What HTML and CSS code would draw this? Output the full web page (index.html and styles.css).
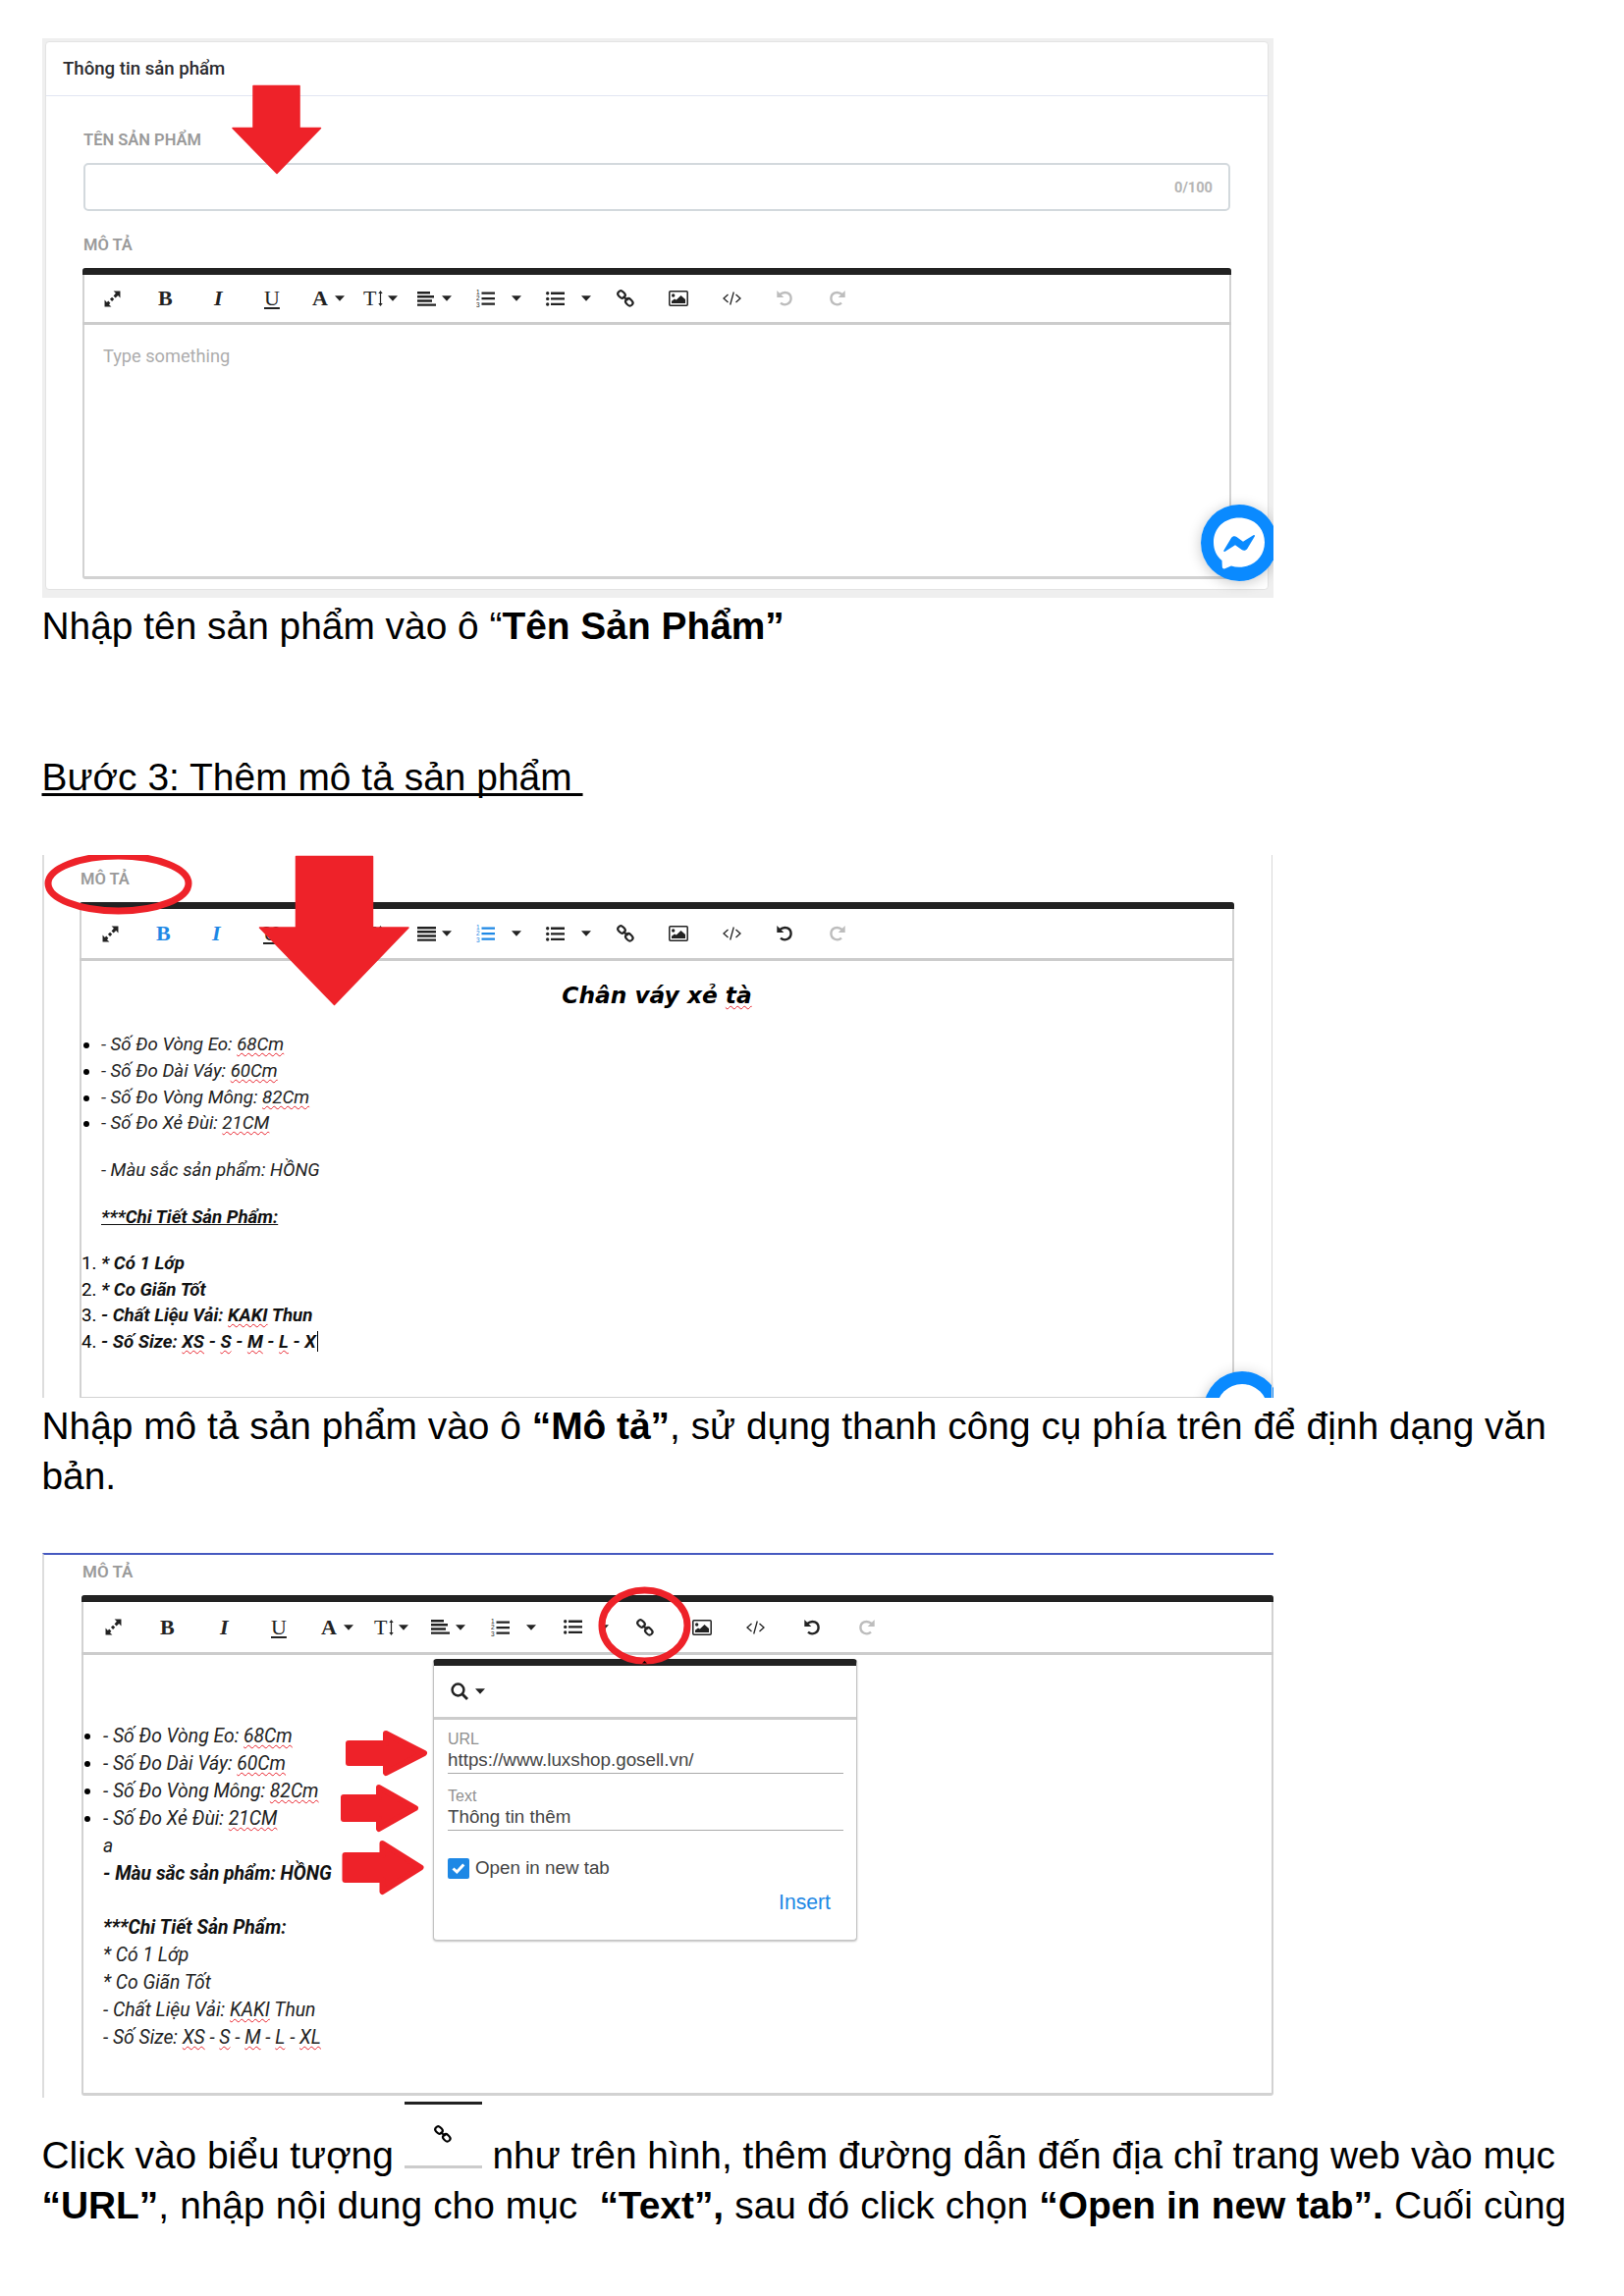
FILE: index.html
```html
<!DOCTYPE html>
<html lang="vi">
<head>
<meta charset="utf-8">
<title>Hướng dẫn thêm sản phẩm</title>
<link rel="stylesheet" href="styles.css">
</head>
<body>
<svg class="defs" aria-hidden="true">
  <symbol id="full" viewBox="0 0 16 16"><path d="M9 .5h6.500v6.500l-2.200-2.200-2.300 2.300-2-2 2.200-2.400zM.5 15.500V9l2.200 2.200 1.300-1.300 2 2-1.300 1.400L7 15.500zM7.600 6.300l2 2-2 2-2-2z"/></symbol>
  <symbol id="caret" viewBox="0 0 9 5"><path d="M0 0h9L4.500 5z"/></symbol>
  <symbol id="updown" viewBox="0 0 5 16"><path d="M2.500 0L4.700 3H3.100v10h1.600L2.500 16 .3 13h1.600V3H.3z"/></symbol>
  <symbol id="left" viewBox="0 0 19 15"><path d="M0 0h13v2.400H0zM0 4.100h17v2.400H0zM0 8.300h15v2.400H0zM0 12.400h19v2.400H0z"/></symbol>
  <symbol id="justify" viewBox="0 0 19 15"><path d="M0 0h19v2.400H0zM0 4.100h19v2.400H0zM0 8.300h19v2.400H0zM0 12.400h19v2.400H0z"/></symbol>
  <symbol id="ul" viewBox="0 0 19 15"><path d="M5 .6h14v2.300H5zM5 6.200h14v2.300H5zM5 11.800h14v2.300H5z"/><circle cx="1.700" cy="1.700" r="1.700"/><circle cx="1.700" cy="7.400" r="1.700"/><circle cx="1.700" cy="13" r="1.700"/></symbol>
  <symbol id="link" viewBox="0 0 18 18"><g fill="none" stroke="currentColor" stroke-width="2.100"><rect x="-4" y="-3" width="8" height="6" rx="3" transform="translate(5 5) rotate(45)"/><rect x="-4" y="-3" width="8" height="6" rx="3" transform="translate(12.800 12.800) rotate(45)"/><path d="M6.500 7l5 4"/></g></symbol>
  <symbol id="image" viewBox="0 0 20 16"><rect x=".8" y=".8" width="18.400" height="14.400" rx="1" fill="none" stroke="currentColor" stroke-width="1.500"/><circle cx="4.700" cy="5" r="1.700"/><path d="M3 13v-2.200l3-2.400 1.800 1.200L12.500 5 17 9v4z"/></symbol>
  <symbol id="code" viewBox="0 0 19 14"><path d="M5.500 3L1 7l4.500 4M13.500 3L18 7l-4.500 4M11.300.5l-3.600 13" fill="none" stroke="currentColor" stroke-width="1.300"/></symbol>
  <symbol id="undo" viewBox="0 0 16 16"><path d="M3 4.200C8.500-.5 14.600 3 14.600 8c0 5.500-6.600 8.300-10.600 4.600" fill="none" stroke="currentColor" stroke-width="2.400"/><path d="M.3 0v7h7z"/></symbol>
  <symbol id="search" viewBox="0 0 18 18"><circle cx="7.500" cy="7.500" r="5.900" fill="none" stroke="currentColor" stroke-width="2.500"/><path d="M11.500 11.500l5.500 5.500" stroke="currentColor" stroke-width="2.800"/></symbol>
</svg>

<main class="page">
  <section class="shot shot-info">
    <div class="card">
      <header class="card-head">Thông tin sản phẩm</header>
      <div class="card-body">
        <div class="label">TÊN SẢN PHẨM</div>
        <div class="field">0/100</div>
        <div class="label label-desc">MÔ TẢ</div>
        <div class="editor">
          <div class="toolbar">
            <svg class="ic full"><use href="#full"/></svg>
            <b class="ltr">B</b><i class="ltr">I</i><u class="ltr">U</u>
            <span class="grp"><b class="ltr">A</b><svg class="ic caret"><use href="#caret"/></svg></span>
            <span class="grp size"><span class="ltr">T</span><svg class="ic updown"><use href="#updown"/></svg><svg class="ic caret"><use href="#caret"/></svg></span>
            <span class="grp align"><svg class="ic bars"><use href="#left"/></svg><svg class="ic caret"><use href="#caret"/></svg></span>
            <span class="grp list"><svg class="ic ol" viewBox="0 0 19 18"><path d="M5.500 2.500H19v2.300H5.500zM5.500 8H19v2.300H5.500zM5.500 13.500H19v2.300H5.500z"/><text x="0" y="5.200">1</text><text x="0" y="11.400">2</text><text x="0" y="17.600">3</text></svg><svg class="ic caret"><use href="#caret"/></svg></span>
            <span class="grp list"><svg class="ic bars"><use href="#ul"/></svg><svg class="ic caret"><use href="#caret"/></svg></span>
            <svg class="ic link"><use href="#link"/></svg>
            <svg class="ic image"><use href="#image"/></svg>
            <svg class="ic code"><use href="#code"/></svg>
            <svg class="ic undo off"><use href="#undo"/></svg>
            <svg class="ic undo redo off"><use href="#undo"/></svg>
          </div>
          <div class="placeholder">Type something</div>
        </div>
      </div>
    </div>
    <div class="messenger">
      <svg viewBox="0 0 78 78"><circle cx="39" cy="39" r="39" fill="#0a8aff"/><path d="M39 13.500c-15 0-26 10.600-26 25 0 7.500 3 14 8.500 18.500l.3 6.500c.1 1.500 1.500 2.300 2.800 1.700l6.400-2.700c2.500.8 5.200 1.200 8 1.200 15 0 26-10.700 26-25.200s-11-25-26-25z" fill="#fff"/><path d="M23.500 46.500l7.500-12.500c1.300-2 3.800-2.300 5.500-1l6.500 4.800 10.500-6.500c1-.6 2 .3 1.300 1.300L47.300 45c-1.300 2-3.900 2.300-5.600 1L35 41.200l-10.200 6.600c-1 .6-2-.2-1.300-1.300z" fill="#0a8aff"/></svg>
    </div>
    <svg class="marks" viewBox="0 0 1254 570"><path d="M215 48.500h47v43h21.500l-44.500 46-45-46h21z" class="fill"/></svg>
  </section>

  <p class="text p1">Nhập tên sản phẩm vào ô “<b>Tên Sản Phẩm”</b></p>
  <p class="text p2"><u>Bước 3: Thêm mô tả sản phẩm&nbsp;</u></p>

  <section class="shot shot-desc">
    <div class="label">MÔ TẢ</div>
    <div class="editor">
      <div class="toolbar">
        <svg class="ic full"><use href="#full"/></svg>
        <b class="ltr on">B</b><i class="ltr on">I</i><u class="ltr">U</u>
        <span class="grp"><b class="ltr">A</b><svg class="ic caret"><use href="#caret"/></svg></span>
        <span class="grp size"><span class="ltr">T</span><svg class="ic updown"><use href="#updown"/></svg><svg class="ic caret"><use href="#caret"/></svg></span>
        <span class="grp align"><svg class="ic bars"><use href="#justify"/></svg><svg class="ic caret"><use href="#caret"/></svg></span>
        <span class="grp list"><svg class="ic ol on" viewBox="0 0 19 18"><path d="M5.500 2.500H19v2.300H5.500zM5.500 8H19v2.300H5.500zM5.500 13.500H19v2.300H5.500z"/><text x="0" y="5.200">1</text><text x="0" y="11.400">2</text><text x="0" y="17.600">3</text></svg><svg class="ic caret"><use href="#caret"/></svg></span>
        <span class="grp list"><svg class="ic bars"><use href="#ul"/></svg><svg class="ic caret"><use href="#caret"/></svg></span>
        <svg class="ic link"><use href="#link"/></svg>
        <svg class="ic image"><use href="#image"/></svg>
        <svg class="ic code"><use href="#code"/></svg>
        <svg class="ic undo"><use href="#undo"/></svg>
        <svg class="ic undo redo off"><use href="#undo"/></svg>
      </div>
      <div class="content">
        <h2>Chân váy xẻ <s>tà</s></h2>
        <ul>
          <li>- Số Đo Vòng Eo: <s>68Cm</s></li>
          <li>- Số Đo Dài Váy: <s>60Cm</s></li>
          <li>- Số Đo Vòng Mông: <s>82Cm</s></li>
          <li>- Số Đo Xẻ Đùi: <s>21CM</s></li>
        </ul>
        <p>- Màu sắc sản phẩm: HỒNG</p>
        <p><b><u>***Chi Tiết Sản Phẩm:</u></b></p>
        <ol>
          <li><b>* Có 1 Lớp</b></li>
          <li><b>* Co Giãn Tốt</b></li>
          <li><b>- Chất Liệu Vải: <s>KAKI</s> Thun</b></li>
          <li><b>- Số Size: <s>XS</s> - <s>S</s> - <s>M</s> - <s>L</s> - X</b><span class="cursor"></span></li>
        </ol>
      </div>
    </div>
    <div class="messenger">
      <svg viewBox="0 0 78 78"><circle cx="39" cy="39" r="39" fill="#0a8aff"/><circle cx="39" cy="39" r="26" fill="#fff"/></svg>
    </div>
    <svg class="marks" viewBox="0 0 1254 553"><ellipse cx="77.500" cy="29" rx="71.500" ry="28" class="ring"/><path d="M258.500 1.500h78V74H373L297.500 152.500 221.500 74h37z" class="fill"/></svg>
  </section>

  <p class="text p3">Nhập mô tả sản phẩm vào ô <b>“Mô tả”</b>, sử dụng thanh công cụ phía trên để định dạng văn<br>bản.</p>

  <section class="shot shot-link">
    <div class="label">MÔ TẢ</div>
    <div class="editor">
      <div class="toolbar">
        <svg class="ic full"><use href="#full"/></svg>
        <b class="ltr">B</b><i class="ltr">I</i><u class="ltr">U</u>
        <span class="grp"><b class="ltr">A</b><svg class="ic caret"><use href="#caret"/></svg></span>
        <span class="grp size"><span class="ltr">T</span><svg class="ic updown"><use href="#updown"/></svg><svg class="ic caret"><use href="#caret"/></svg></span>
        <span class="grp align"><svg class="ic bars"><use href="#left"/></svg><svg class="ic caret"><use href="#caret"/></svg></span>
        <span class="grp list"><svg class="ic ol" viewBox="0 0 19 18"><path d="M5.500 2.500H19v2.300H5.500zM5.500 8H19v2.300H5.500zM5.500 13.500H19v2.300H5.500z"/><text x="0" y="5.200">1</text><text x="0" y="11.400">2</text><text x="0" y="17.600">3</text></svg><svg class="ic caret"><use href="#caret"/></svg></span>
        <span class="grp list"><svg class="ic bars"><use href="#ul"/></svg><svg class="ic caret"><use href="#caret"/></svg></span>
        <svg class="ic link"><use href="#link"/></svg>
        <svg class="ic image"><use href="#image"/></svg>
        <svg class="ic code"><use href="#code"/></svg>
        <svg class="ic undo"><use href="#undo"/></svg>
        <svg class="ic undo redo off"><use href="#undo"/></svg>
      </div>
      <div class="content">
        <ul>
          <li>- Số Đo Vòng Eo: <s>68Cm</s></li>
          <li>- Số Đo Dài Váy: <s>60Cm</s></li>
          <li>- Số Đo Vòng Mông: <s>82Cm</s></li>
          <li>- Số Đo Xẻ Đùi: <s>21CM</s></li>
        </ul>
        <p>a<br><b>- Màu sắc sản phẩm: HỒNG</b><br><br><b>***Chi Tiết Sản Phẩm:</b><br>* Có 1 Lớp<br>* Co Giãn Tốt<br>- Chất Liệu Vải: <s>KAKI</s> Thun<br>- Số Size: <s>XS</s> - <s>S</s> - <s>M</s> - <s>L</s> - <s>XL</s></p>
      </div>
    </div>
    <div class="popup">
      <div class="popup-bar"><svg class="ic search"><use href="#search"/></svg><svg class="ic caret"><use href="#caret"/></svg></div>
      <div class="popup-body">
        <div class="input"><small>URL</small><span>https://www.luxshop.gosell.vn/</span></div>
        <div class="input"><small>Text</small><span>Thông tin thêm</span></div>
        <div class="check"><svg class="box" viewBox="0 0 22 21"><rect width="22" height="21" rx="2" fill="#1e88e5"/><path d="M5.500 10.500l3.800 3.500 7-7.500" fill="none" stroke="#fff" stroke-width="3"/></svg><span>Open in new tab</span></div>
        <div class="insert">Insert</div>
      </div>
    </div>
    <svg class="marks" viewBox="0 0 1254 555">
      <ellipse cx="613.500" cy="74" rx="43.500" ry="36" class="ring"/><path d="M611 112.500l2.500-2.500 2.500 2.500z"/>
      <g class="fill round"><path d="M312 194h38v-10l39 20-39 20v-10h-38z"/><path d="M307 249h36v-10l37 21-37 21v-10h-36z"/><path d="M308.500 308h38v-12l39 24.500-39 24.500v-12h-38z"/></g>
    </svg>
  </section>

  <p class="text p4">Click vào biểu tượng <span class="inline-shot"><svg class="ic link"><use href="#link"/></svg></span> như trên hình, thêm đường dẫn đến địa chỉ trang web vào mục<br><span class="last"><b>“URL”</b>, nhập nội dung cho mục&nbsp; <b>“Text”,</b> sau đó click chọn <b>“Open in new tab”.</b> Cuối cùng</span></p>
</main>
</body>
</html>
```
FILE: styles.css
```css
* { box-sizing: border-box; }
body { margin: 0; background: #fff; color: #000; }
.defs { position: absolute; width: 0; height: 0; }
.page { width: 1654px; height: 2339px; padding: 39px 0 0 43px; overflow: hidden; }

/* Body text of the guide */
.text { margin: 0 0 0 -.5px; font: 38.89px/51px "Liberation Sans", Arial, sans-serif; white-space: nowrap; }
.p1 { margin-top: 3px; }
.p2 { margin-top: 103px; }
.p2 u { letter-spacing: .04px; text-decoration-thickness: 3px; text-underline-offset: 3px; text-decoration-skip-ink: none; }
.p3 { margin-top: 3px; }
.p4 { margin-top: 4px; }
.last { word-spacing: .25px; }
.inline-shot { display: inline-block; width: 79px; height: 68px; padding: 21px 0 0 30px; border-top: 3px solid #222; border-bottom: 3px solid #ccc; overflow: hidden; vertical-align: baseline; }

/* Screens */
.shot { position: relative; width: 1254px; overflow: hidden; font: 18.2px/20px Roboto, "Noto Sans", sans-serif; color: #222; }
.shot-info { height: 570px; padding: 3px 5px 8px 3px; background: #efefef; }
.shot-desc { height: 553px; margin-top: 54px; padding: 15px 0 0 37px; border-left: 2px solid #ddd; }
.shot-link { height: 555px; margin-top: 53px; padding: 7px 0 0 39px; border-left: 2px solid #ddd; border-top: 2px solid #4659c0; }
.shot-desc::after { content: ""; position: absolute; top: 0; bottom: 0; right: 1px; width: 1px; background: #d8d8d8; }
.marks { position: absolute; inset: 0; width: 1254px; height: 100%; }
.shot-desc .marks, .shot-link .marks { left: -2px; }
.shot-link .marks { top: -2px; height: 555px; }
.fill { fill: #ee2229; stroke: #ee2229; stroke-width: 1.5px; stroke-linejoin: round; }
.round { stroke-width: 6px; }
.ring { fill: none; stroke: #ee2229; stroke-width: 7px; }
.messenger { position: absolute; left: 1180px; top: 475px; width: 78px; height: 78px; border-radius: 50%; box-shadow: 0 2px 14px rgba(0, 0, 0, .22); }
.messenger svg { display: block; width: 78px; height: 78px; }
.shot-desc .messenger { left: 1181px; top: 526px; }

.card { height: 559px; background: #fff; border: 1px solid #e3e3e3; border-radius: 4px; }
.card-head { height: 55px; padding: 17px 17px 0; border-bottom: 1px solid #e2e6f2; font-weight: 500; font-size: 18.6px; color: #2b2b2f; }
.card-body { padding: 35px 38px 0; }
.label { font-weight: 600; font-size: 16.5px; color: #9a9a9a; }
.label-desc { margin-top: 25px; }
.field { display: flex; width: 1168px; height: 49px; margin-top: 13px; padding: 0 16px; align-items: center; justify-content: flex-end; border: 2px solid #d3d9dd; border-radius: 5px; font-size: 14.6px; font-weight: 700; color: #b5b5b5; }

/* Rich-text editor */
.editor { width: 1170px; height: 317px; margin: 13px 0 0 -1px; border: solid #d2d2d2; border-width: 0 2px 3px; border-radius: 3px; }
.toolbar { display: grid; height: 58px; margin: 0 -2px; padding-left: 22px; grid-template-columns: 55px 57px 51px 49px 52px 55px 60px 71px 72px 53px 55px 55px 54px 20px; align-items: center; border-top: 7px solid #222; border-bottom: 3px solid #ccc; border-radius: 3px 3px 0 0; color: #222; }
.placeholder { padding: 22px 19px; color: #adadad; }
.ic { display: block; fill: currentColor; flex: none; }
.full { width: 17px; height: 17px; }
.caret { width: 10px; height: 6px; }
.updown { width: 5px; height: 16px; }
.bars { width: 19px; height: 15px; }
.ol { width: 19px; height: 18px; font: 6.5px "Liberation Sans", sans-serif; }
.link { width: 18px; height: 18px; }
.image { width: 20px; height: 16px; }
.code { width: 19px; height: 14px; }
.undo { width: 16px; height: 16px; }
.redo { transform: scaleX(-1); }
.search { width: 18px; height: 18px; }
.off { color: #bdbdbd; }
.on { color: #1e88e5; }
.ltr { font: 700 22px/24px "Liberation Serif", "Times New Roman", serif; }
i.ltr { font-style: italic; }
u.ltr { font-weight: 400; text-underline-offset: 2px; }
.grp { display: flex; align-items: center; gap: 7px; }
.size { gap: 2px; }
.size .ltr { font-weight: 400; }
.size .caret { margin-left: 3px; }
.align { gap: 6px; }
.list { gap: 17px; }

.content { font-style: italic; }
.content ul, .content ol { margin: 0; padding: 0 0 0 20px; }
.content li::marker { font-style: normal; color: #000; }
.content p { margin: 0 0 0 20px; }
.content s { text-decoration: underline wavy #e8222c 1px; text-underline-offset: 2px; text-decoration-skip-ink: none; }
.content b { font-weight: 700; color: #111; }

.shot-desc .editor { width: 1176px; height: 507px; margin-top: 13px; }
.shot-desc .toolbar { height: 60px; padding-left: 23px; grid-template-columns: 55px 57px 52px 50px 52px 55px 60px 71px 72px 53px 55px 55px 54px 20px; }
.shot-desc .content { font-size: 18.7px; line-height: 26.8px; }
.content h2 { margin: 21px 0 23px; text-align: center; font: italic 700 23.3px/28px "DejaVu Sans", Verdana, sans-serif; color: #000; }
.shot-desc .content p { margin-top: 21px; }
.shot-desc .content ol { margin-top: 20px; }
.cursor { display: inline-block; width: 1px; height: 21px; margin-left: 1px; background: #000; vertical-align: -4px; }

.shot-link .label { font-size: 17px; }
.shot-link .editor { width: 1214px; height: 510px; margin-top: 14px; }
.shot-link .toolbar { height: 61px; padding-left: 24px; grid-template-columns: 56px 61px 52px 51px 54px 58px 61px 74px 74px 57px 55px 59px 56px 20px; }
.shot-link .content { margin-top: 69px; font-size: 19.35px; line-height: 27.9px; }

.popup { position: absolute; left: 396px; top: 106px; width: 432px; height: 287px; background: #fff; border: 1px solid #c4c4c4; border-top: 7px solid #222; border-radius: 4px; box-shadow: 0 1px 2px rgba(0, 0, 0, .25); font: 18.8px/22px "Liberation Sans", Arial, sans-serif; color: #444; }
.popup-bar { display: flex; height: 55px; padding-left: 17px; gap: 7px; align-items: center; border-bottom: 3px solid #ccc; color: #222; }
.popup-body { padding: 10px 13px 0 14px; }
.input { display: flex; flex-direction: column; height: 45px; margin-bottom: 13px; border-bottom: 1.5px solid #aaa; }
.input small { font-size: 16px; line-height: 20px; color: #909090; }
.check { display: flex; gap: 6px; margin-top: 27px; align-items: center; }
.box { width: 22px; height: 21px; }
.insert { margin: 13px 13px 0 0; text-align: right; font-size: 21.2px; color: #1e88e5; }
```
